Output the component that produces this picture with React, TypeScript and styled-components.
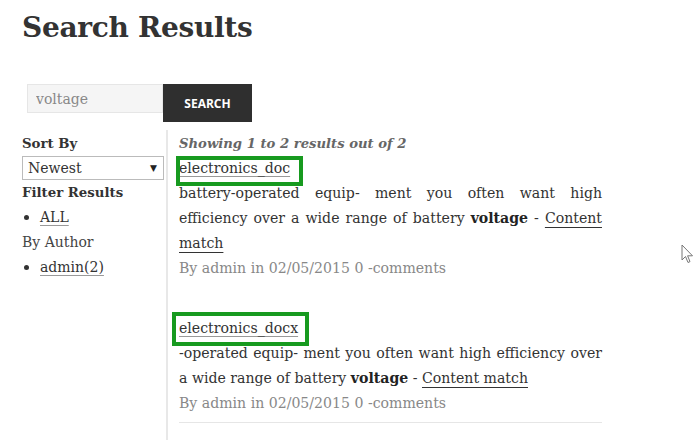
import React from "react";
import styled, { createGlobalStyle } from "styled-components";

const Global = createGlobalStyle`
  html, body { margin: 0; padding: 0; background: #fff; }
  body { font-family: "DejaVu Serif", "Liberation Serif", serif; color: #333; width: 694px; height: 440px; overflow: hidden; position: relative; }
`;

const Page = styled.div`
  padding: 8px 0 0 22px;
`;

const Title = styled.h1`
  margin: 0;
  font-size: 28px;
  line-height: 40px;
  font-weight: bold;
  color: #333;
  letter-spacing: -0.3px;
`;

const SearchForm = styled.form`
  display: flex;
  align-items: flex-start;
  margin: 36px 0 0 5px;
`;

const SearchInput = styled.input`
  box-sizing: border-box;
  width: 136px;
  height: 29px;
  border: 1px solid #e6e6e6;
  background: #f5f5f5;
  padding: 0 8px;
  font-family: "DejaVu Serif", serif;
  font-size: 14px;
  color: #888;
  outline: none;
`;

const SearchButton = styled.button`
  box-sizing: border-box;
  width: 89px;
  height: 38px;
  border: none;
  background: #2f2f2f;
  color: #fff;
  font-family: "Open Sans", "Liberation Sans", sans-serif;
  font-weight: 700;
  font-size: 12px;
  padding: 0;
`;

const Main = styled.div`
  display: grid;
  grid-template-columns: 144px 435px;
  margin-top: 8px;
`;

const Sidebar = styled.aside`
  font-size: 14px;
  line-height: 25px;
  padding-top: 1px;
`;

const SideHeading = styled.div`
  font-weight: bold;
  font-size: 13.3px;
  color: #333;
`;

const SelectBox = styled.div`
  box-sizing: border-box;
  width: 142px;
  height: 24px;
  border: 1px solid #bbb;
  display: flex;
  align-items: center;
  justify-content: space-between;
  padding: 0 6px 0 5px;
  color: #333;
  font-size: 14px;
  background: #fff;
`;

const Caret = styled.span`
  font-size: 9px;
  color: #222;
`;

const List = styled.ul`
  margin: 0;
  padding: 0;
  list-style: none;
`;

const ListItem = styled.li`
  display: flex;
  align-items: center;
  &::before {
    content: "";
    width: 5px;
    height: 5px;
    border-radius: 50%;
    background: #333;
    margin: 0 11px 0 2px;
  }
`;

const Link = styled.a`
  color: #333;
  text-decoration: underline;
  text-decoration-color: #999;
  text-underline-offset: 3px;
`;

const Plain = styled.div`
  color: #444;
`;

const Content = styled.section`
  border-left: 2px solid #e8e8e8;
  padding-left: 11px;
  padding-top: 1px;
  min-height: 320px;
  font-size: 14.1px;
  line-height: 25px;
`;

const Showing = styled.div`
  font-weight: bold;
  font-style: italic;
  font-size: 13.2px;
  color: #666;
`;

const Result = styled.article<{ $gap: number; $last?: boolean }>`
  margin-top: ${(p) => p.$gap}px;
  width: 423px;
  ${(p) => (p.$last ? "border-bottom: 1px solid #e6e6e6; padding-bottom: 6px;" : "")}
`;

const TitleWrap = styled.div`
  position: relative;
  display: inline-block;
`;

const Highlight = styled.span<{ $l: number; $t: number; $w: number; $h: number }>`
  position: absolute;
  left: ${(p) => p.$l}px;
  top: ${(p) => p.$t}px;
  width: ${(p) => p.$w}px;
  height: ${(p) => p.$h}px;
  box-sizing: border-box;
  border: 4px solid #179a1f;
  pointer-events: none;
`;

const Body = styled.p`
  margin: 0;
  text-align: justify;
  color: #333;
`;

const Strong = styled.b`
  color: #222;
`;

const MatchLink = styled.a`
  color: #333;
  text-decoration: underline;
  text-decoration-color: #333;
  text-underline-offset: 4px;
`;

const Meta = styled.div`
  color: #888;
`;

const Cursor = styled.svg`
  position: absolute;
  left: 681px;
  top: 244px;
`;

export default function App() {
  return (
    <>
      <Global />
      <Page>
        <Title>Search Results</Title>
        <SearchForm onSubmit={(e) => e.preventDefault()}>
          <SearchInput defaultValue="voltage" />
          <SearchButton type="submit">SEARCH</SearchButton>
        </SearchForm>
        <Main>
          <Sidebar>
            <SideHeading>Sort By</SideHeading>
            <SelectBox>
              <span>Newest</span>
              <Caret>▼</Caret>
            </SelectBox>
            <SideHeading>Filter Results</SideHeading>
            <List>
              <ListItem>
                <Link>ALL</Link>
              </ListItem>
            </List>
            <Plain>By Author</Plain>
            <List>
              <ListItem>
                <Link>admin(2)</Link>
              </ListItem>
            </List>
          </Sidebar>
          <Content>
            <Showing>Showing 1 to 2 results out of 2</Showing>
            <Result $gap={0}>
              <TitleWrap>
                <Link>electronics_doc</Link>
                <Highlight $l={-3} $t={0} $w={127} $h={30} />
              </TitleWrap>
              <Body>
                battery-operated equip- ment you often want high efficiency over a wide range of battery{" "}
                <Strong>voltage</Strong> - <MatchLink>Content match</MatchLink>
              </Body>
              <Meta>By admin in 02/05/2015 0 -comments</Meta>
            </Result>
            <Result $gap={35} $last>
              <TitleWrap>
                <Link>electronics_docx</Link>
                <Highlight $l={-7} $t={-4} $w={137} $h={34} />
              </TitleWrap>
              <Body>
                -operated equip- ment you often want high efficiency over a wide range of battery{" "}
                <Strong>voltage</Strong> - <MatchLink>Content match</MatchLink>
              </Body>
              <Meta>By admin in 02/05/2015 0 -comments</Meta>
            </Result>
          </Content>
        </Main>
      </Page>
      <Cursor width="13" height="21" viewBox="0 0 13 21">
        <path d="M1 1 L1 16 L4.5 12.5 L7 18.5 L9 17.6 L6.6 11.8 L11.5 11.8 Z" fill="#fff" stroke="#777" strokeWidth="1" strokeLinejoin="round" />
      </Cursor>
    </>
  );
}
